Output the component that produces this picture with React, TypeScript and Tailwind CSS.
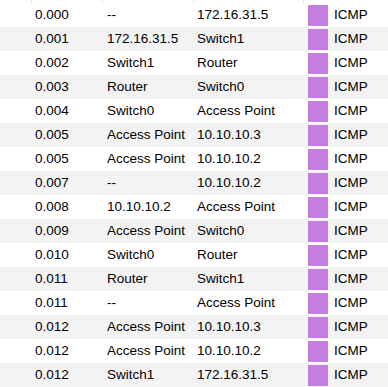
import React from 'react';

type Row = { time: string; from: string; to: string; type: string };

const ROWS: Row[] = [
  { time: '0.000', from: '--', to: '172.16.31.5', type: 'ICMP' },
  { time: '0.001', from: '172.16.31.5', to: 'Switch1', type: 'ICMP' },
  { time: '0.002', from: 'Switch1', to: 'Router', type: 'ICMP' },
  { time: '0.003', from: 'Router', to: 'Switch0', type: 'ICMP' },
  { time: '0.004', from: 'Switch0', to: 'Access Point', type: 'ICMP' },
  { time: '0.005', from: 'Access Point', to: '10.10.10.3', type: 'ICMP' },
  { time: '0.005', from: 'Access Point', to: '10.10.10.2', type: 'ICMP' },
  { time: '0.007', from: '--', to: '10.10.10.2', type: 'ICMP' },
  { time: '0.008', from: '10.10.10.2', to: 'Access Point', type: 'ICMP' },
  { time: '0.009', from: 'Access Point', to: 'Switch0', type: 'ICMP' },
  { time: '0.010', from: 'Switch0', to: 'Router', type: 'ICMP' },
  { time: '0.011', from: 'Router', to: 'Switch1', type: 'ICMP' },
  { time: '0.011', from: '--', to: 'Access Point', type: 'ICMP' },
  { time: '0.012', from: 'Access Point', to: '10.10.10.3', type: 'ICMP' },
  { time: '0.012', from: 'Access Point', to: '10.10.10.2', type: 'ICMP' },
  { time: '0.012', from: 'Switch1', to: '172.16.31.5', type: 'ICMP' },
];

const COLS = 'grid grid-cols-[32px_71px_91px_110px_1fr]';

export default function App() {
  return (
    <div className="w-[388px] h-[387px] overflow-hidden bg-white text-black text-[13.5px] leading-none font-['Liberation_Sans',Arial,sans-serif]">
      {/* header is scrolled up, only the column dividers peek through */}
      <div className={`${COLS} h-[3px]`}>
        <div className="border-r border-[#e3e3e3]" />
        <div className="border-r border-[#e3e3e3]" />
        <div className="border-r border-[#e3e3e3]" />
        <div className="border-r border-[#e3e3e3]" />
        <div />
      </div>
      {ROWS.map((r, idx) => (
        <div key={idx} className={`${COLS} h-[24px] items-center ${idx % 2 === 1 ? 'bg-[#f3f3f3]' : 'bg-white'}`}>
          <div />
          <div className="pl-[3px] whitespace-nowrap">{r.time}</div>
          <div className="pl-[4px] whitespace-nowrap overflow-hidden">{r.from}</div>
          <div className="pl-[3px] whitespace-nowrap overflow-hidden">{r.to}</div>
          <div className="flex items-center h-full">
            <div className="ml-[4px] w-[20px] h-[21px] bg-[#c57ee0]" />
            <span className="ml-[6px]">{r.type}</span>
          </div>
        </div>
      ))}
    </div>
  );
}
